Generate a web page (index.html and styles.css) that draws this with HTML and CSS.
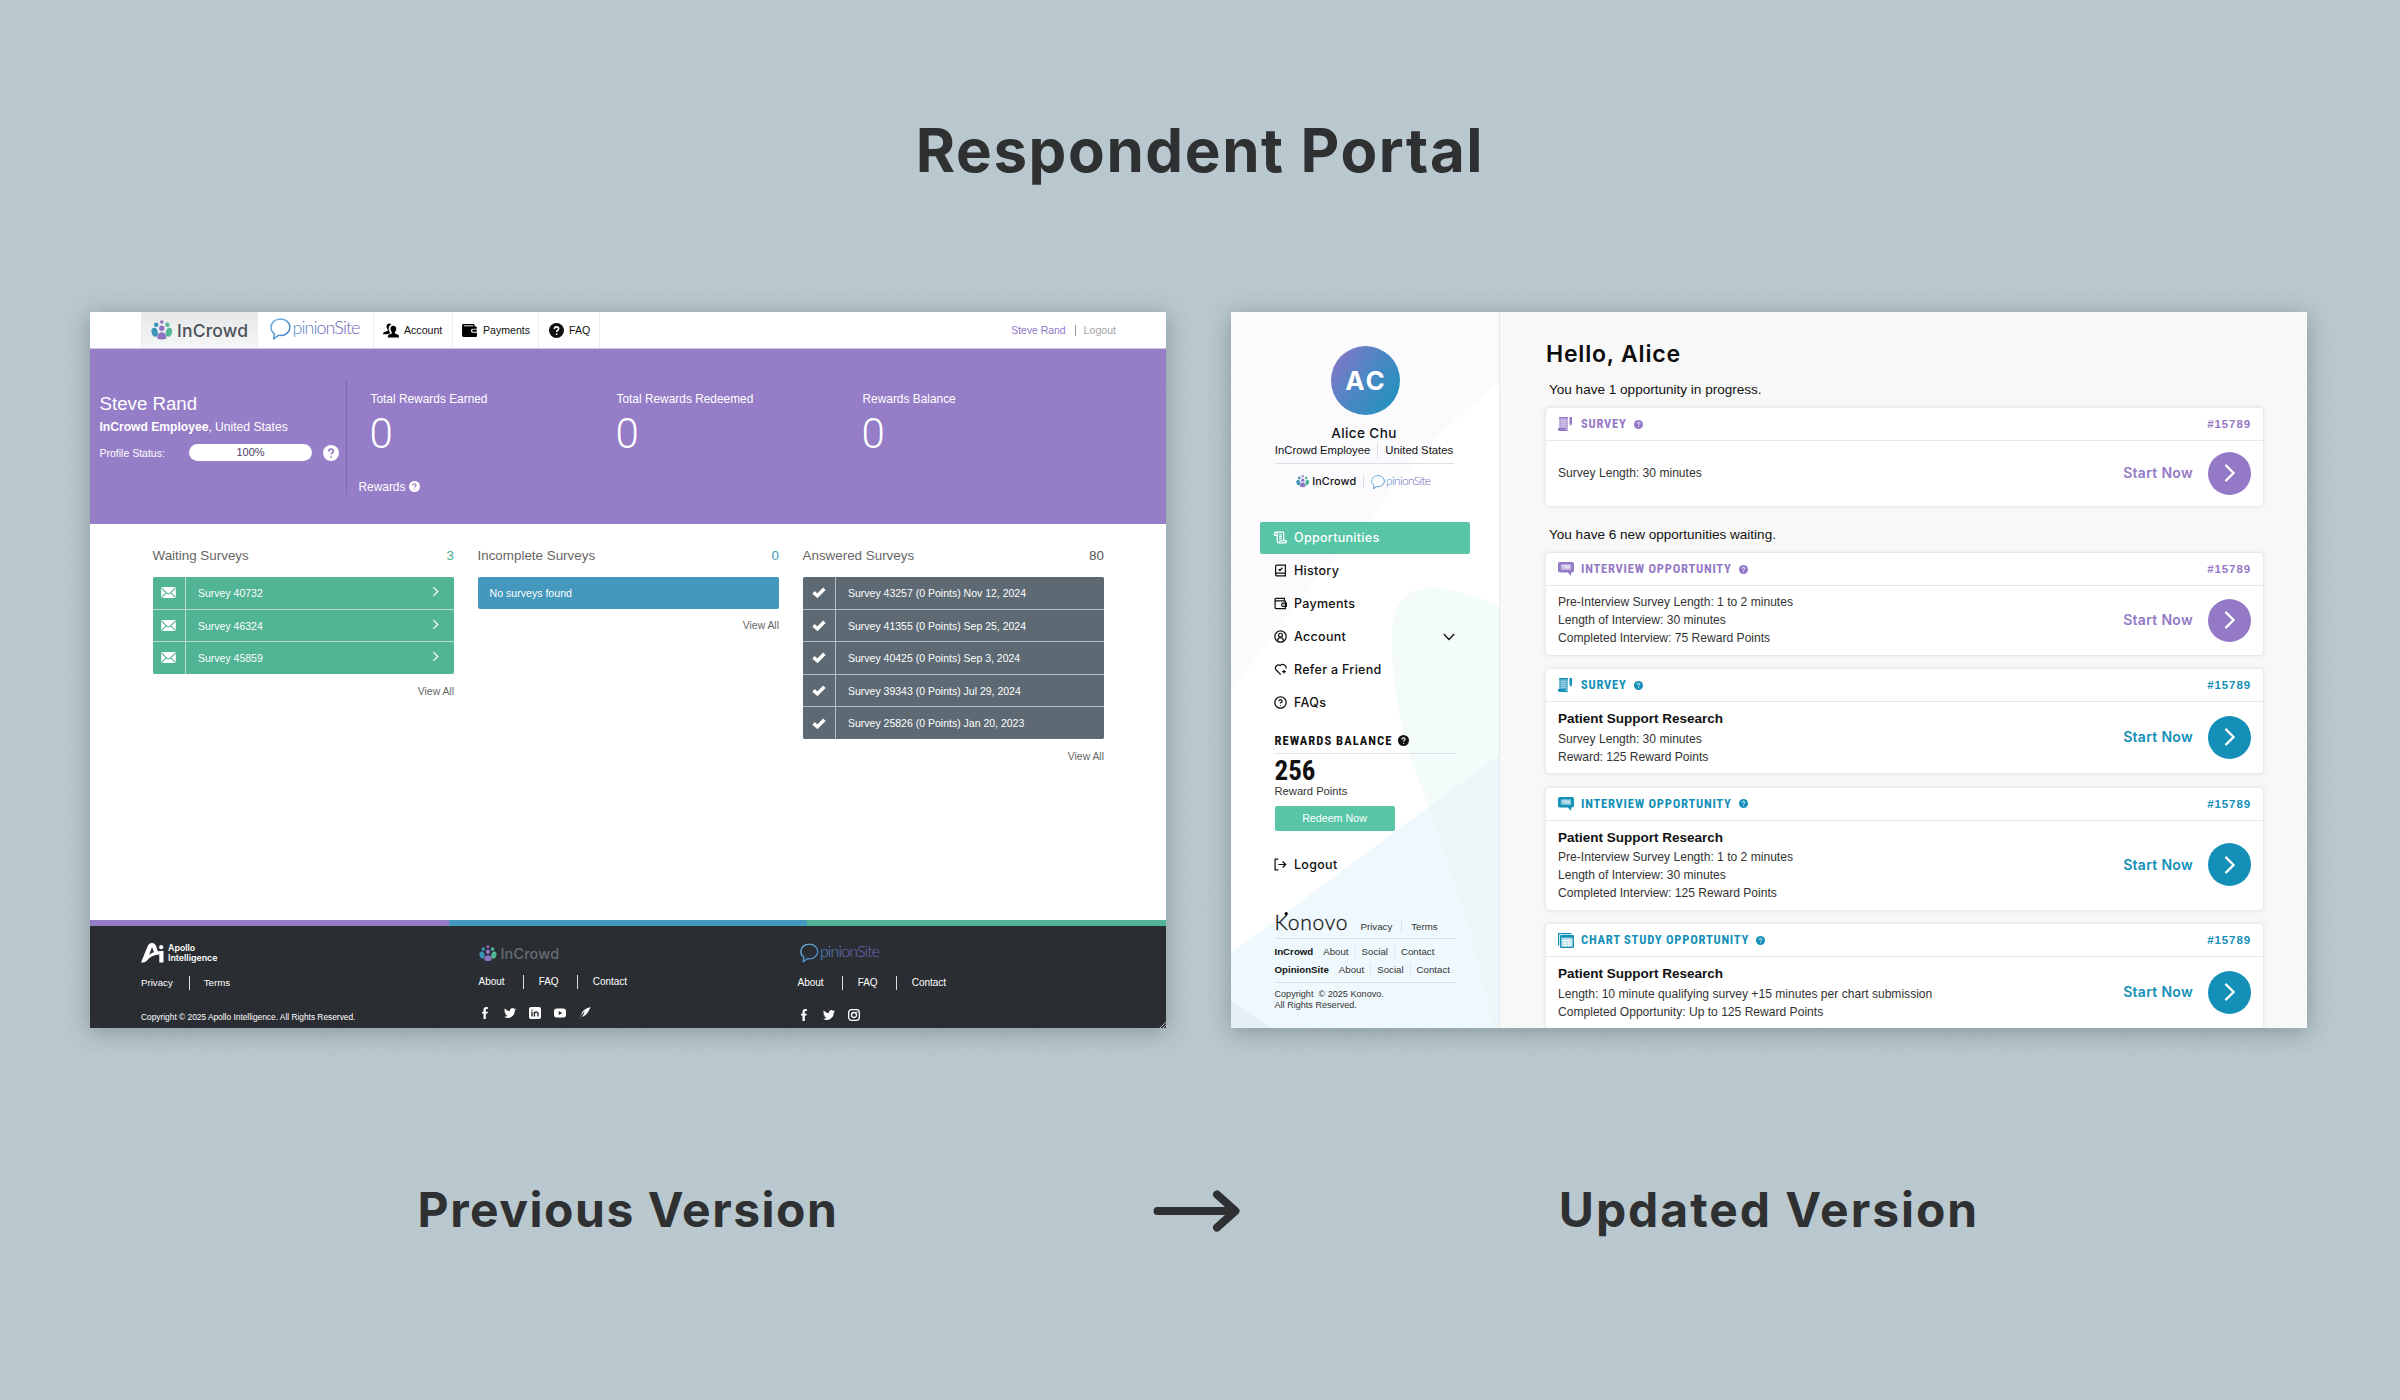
FILE: index.html
```html
<!DOCTYPE html>
<html lang="en">
<head>
<meta charset="UTF-8">
<title>Respondent Portal</title>
<link rel="stylesheet" href="styles.css">
</head>
<body>
  <!-- shared icons -->
  <svg class="sprite" aria-hidden="true">
    <defs>
      <linearGradient id="opinion-bubble" x1="0" y1="0" x2="1" y2="1">
        <stop offset="0" stop-color="#6fb7e2"/>
        <stop offset="1" stop-color="#3f7fc4"/>
      </linearGradient>
      <linearGradient id="opinion-text" x1="0" y1="0" x2="1" y2="0">
        <stop offset="0" stop-color="#5b93cf"/>
        <stop offset="0.5" stop-color="#6a68b8"/>
        <stop offset="1" stop-color="#6f62b5"/>
      </linearGradient>
    </defs>
    <symbol id="mark-incrowd" viewBox="0 0 22 20">
      <circle cx="10.8" cy="2" r="1.8" fill="#8c74c0"/>
      <circle cx="5.2" cy="4.8" r="2.2" fill="#3d93b5"/>
      <circle cx="16.4" cy="4.8" r="2.2" fill="#55b598"/>
      <circle cx="10.8" cy="8.3" r="2.7" fill="#8c74c0"/>
      <ellipse cx="3.7" cy="12.2" rx="3.1" ry="4.6" fill="#3d93b5" transform="rotate(-15 3.7 12.2)"/>
      <ellipse cx="17.9" cy="12.2" rx="3.1" ry="4.6" fill="#55b598" transform="rotate(15 17.9 12.2)"/>
      <path d="M6.3 18.6c0-4 1.6-6.3 4.5-6.3s4.5 2.3 4.5 6.3c-2.6 1.3-6.4 1.3-9 0z" fill="#8c74c0"/>
    </symbol>
    <symbol id="mark-opinion" viewBox="0 0 22 22">
      <path d="M3.6 21l.8-5.2C2.200 14.300 1 12 1 9.300 1 4.700 5.200 1 10.500 1S20 4.700 20 9.300s-4.200 8.300-9.500 8.300c-.8 0-1.500-.1-2.200-.2z" fill="none" stroke="url(#opinion-bubble)" stroke-width="1.500" stroke-linejoin="round"/>
    </symbol>
    <symbol id="i-help" viewBox="0 0 16 16">
      <circle cx="8" cy="8" r="8" fill="currentColor"/>
      <path d="M5.700 6.400c0-1.400 1-2.300 2.300-2.300s2.300.9 2.300 2.100c0 1.600-2.200 1.700-2.200 3.400M8.100 11.200v1.500" fill="none" stroke="var(--mark)" stroke-width="1.700"/>
    </symbol>
    <symbol id="i-user" viewBox="0 0 18 16">
      <path d="M9.500 1.200c-.5-.8-1.400-1.200-2.400-1.200C5.300 0 4 1.300 4 3.200c0 1.500.5 2.900 1.400 3.700v1.400L1.400 10C.5 10.400 0 11.200 0 12.200h5.600l2.700-1.400c-1.400-1.500-2-3.300-1.900-5.200.1-2 1.300-3.700 3.100-4.400z"/>
      <path d="M11.600 2.600c2 0 3.300 1.400 3.300 3.400 0 1.500-.6 2.900-1.500 3.700v1.600l3.500 1.600c.8.4 1.100 1.200 1.100 3.100H5.400c0-1.900.3-2.700 1.100-3.100l3.400-1.600V9.700C9 8.900 8.400 7.500 8.400 6c0-2 1.200-3.400 3.200-3.400z"/>
    </symbol>
    <symbol id="i-wallet" viewBox="0 0 16 14">
      <path d="M1.500 0H12c1 0 1.500.5 1.500 1.300v1.400h1c.9 0 1.500.6 1.500 1.500v.9h-4.200c-1.300 0-2.200.9-2.200 2.100s.9 2.100 2.200 2.100H16v3c0 1-.6 1.700-1.500 1.700h-13C.6 14 0 13.300 0 12.400V1.500C0 .6.600 0 1.500 0z"/>
      <rect x="2" y="1.500" width="10" height="1" fill="#fff"/>
      <rect x="10.800" y="6" width="5.200" height="2.400" rx="1.200"/>
    </symbol>
    <symbol id="i-mail" viewBox="0 0 16 12">
      <rect width="16" height="12" rx="1.500" fill="#fff"/>
      <path d="M.5 1.200l6 5.800c.9.800 2.100.8 3 0l6-5.800M.6 11.200l4.800-5M15.400 11.200l-4.800-5" fill="none" stroke="#51b494" stroke-width="1.200"/>
    </symbol>
    <symbol id="i-check" viewBox="0 0 14 11">
      <path d="M1.500 5.400l3.900 3.400 7-7" fill="none" stroke="#fff" stroke-width="3.400"/>
    </symbol>
    <symbol id="i-chevron" viewBox="0 0 8 12">
      <path d="M1.500 1l5 5-5 5" fill="none" stroke="currentColor" stroke-width="1.400"/>
    </symbol>
    <symbol id="i-facebook" viewBox="0 0 12 12">
      <path d="M4.500 12V6.600H3V4.700h1.500V3.200C4.500 1.200 5.500 0 7.400 0h1.400v2H7.700c-.7 0-.9.400-.9 1v1.700h2l-.2 1.900H6.800V12z"/>
    </symbol>
    <symbol id="i-twitter" viewBox="0 0 24 24">
      <path d="M24 4.600a10 10 0 0 1-2.800.8 5 5 0 0 0 2.200-2.700 10 10 0 0 1-3.100 1.200 4.900 4.900 0 0 0-8.400 4.500A14 14 0 0 1 1.700 3.100a4.900 4.900 0 0 0 1.500 6.600 5 5 0 0 1-2.200-.6 4.900 4.900 0 0 0 3.900 4.900 5 5 0 0 1-2.200.1 4.900 4.900 0 0 0 4.600 3.400A9.900 9.900 0 0 1 0 19.500 14 14 0 0 0 21.500 7.100 10 10 0 0 0 24 4.600z"/>
    </symbol>
    <symbol id="i-linkedin" viewBox="0 0 12 12">
      <rect width="12" height="12" rx="2"/>
      <path d="M3 4.800V9.500M5.400 9.500V4.800M5.400 7c0-2.700 3.600-2.700 3.600 0v2.500M3 2.400v1.300" fill="none" stroke="#2a2e33" stroke-width="1.400"/>
    </symbol>
    <symbol id="i-youtube" viewBox="0 0 12 12">
      <rect y="1.400" width="12" height="9.200" rx="2.800"/>
      <path d="M4.700 3.900L8.300 6 4.700 8.100z" fill="#2a2e33"/>
    </symbol>
    <symbol id="i-feather" viewBox="0 0 12 12">
      <path d="M.2 12C1.600 8.500 3.400 6.200 6 4c-1 2-.8 1.400-1.600 3.600L2.800 9.800C6.500 9.300 9.300 5.600 11.600 0 7.500.8 3.400 3.600 2.200 7.400 1.700 9 .8 10.400 0 11.800z"/>
    </symbol>
    <symbol id="i-instagram" viewBox="0 0 12 12">
      <rect x=".7" y=".7" width="10.600" height="10.600" rx="2.800" fill="none" stroke="#fff" stroke-width="1.300"/>
      <circle cx="6" cy="6" r="2.500" fill="none" stroke="#fff" stroke-width="1.300"/>
      <circle cx="9" cy="3" r=".7"/>
    </symbol>
    <symbol id="i-survey" viewBox="0 0 14 14">
      <path d="M1.200 0h8.600v12H1.200z" opacity=".7"/>
      <path d="M0 11h7.500v1.600h2.300V14H1.200C.5 14 0 13.500 0 12.800zM11.500 0H14v7L12.700 8.700 11.500 7zM1.200 0h8.600v1.200H1.200z"/>
      <path d="M3 3.200h5M3 5.200h5M3 7.200h5M3 9.200h5" stroke="#fff" stroke-width=".7" opacity=".7"/>
    </symbol>
    <symbol id="i-interview" viewBox="0 0 16 14">
      <path d="M2 0h12c1.200 0 2 .8 2 2v6.500c0 1.200-.8 2-2 2h-.8V14L9.800 10.500H2c-1.200 0-2-.8-2-2V2C0 .8.800 0 2 0z"/>
      <rect x="2.800" y="2.300" width="10.400" height="5.800" rx=".8" fill="#fff" opacity=".45"/>
      <path d="M4 4h8M5.500 5.800H12" stroke="#fff" stroke-width=".8"/>
    </symbol>
    <symbol id="i-chart" viewBox="0 0 16 15">
      <path d="M.6 12.500V.6h12.800" fill="none" stroke="currentColor" stroke-width="1.200"/>
      <rect x="2.600" y="2.600" width="12.800" height="11.800" rx=".6" fill="#fff" stroke="currentColor" stroke-width="1.200"/>
      <rect x="2.600" y="2.600" width="12.800" height="11.800" fill="currentColor" fill-opacity=".35"/>
      <path d="M2.600 3.600h12.800" stroke="currentColor" stroke-width="2"/>
      <path d="M4.200 7.600h9.600M4.200 10h9.600M4.200 12.300h9.600M6.800 5.500v8M11 5.500v8" stroke="#fff" stroke-width=".9"/>
    </symbol>
    <symbol id="i-scroll" viewBox="0 0 24 24">
      <path d="M6 9V19.500A2.500 2.500 0 0 0 8.500 22H20.500A2.500 2.500 0 0 0 23 19.500V18H11V19.500A2.500 2.500 0 0 1 8.500 22M18 18V4.500A2.500 2.500 0 0 0 15.500 2H3.500A2.500 2.500 0 0 0 1 4.500V8H6V4.500A2.500 2.500 0 0 0 3.500 2M9.500 7H14.500M9.500 10.500H14.500M9.500 14H14.500"/>
    </symbol>
    <symbol id="i-history" viewBox="0 0 24 24">
      <path d="M3 4.500A2.500 2.500 0 0 1 5.500 2H21V22H5.500A2.500 2.500 0 0 1 3 19.500zM3 19A2.500 2.500 0 0 1 5.500 17H21M8.500 9.500L11 12 15.500 7"/>
    </symbol>
    <symbol id="i-purse" viewBox="0 0 24 24">
      <path d="M21 7V21.500H4A2 2 0 0 1 2 19.500V4.500A2 2 0 0 1 4 2.500H19V7M2 7H21M23 11.500H17A3 3 0 0 0 17 17.500H23zM17.500 14.400V14.600"/>
    </symbol>
    <symbol id="i-account" viewBox="0 0 24 24">
      <circle cx="12" cy="12" r="10.500"/>
      <circle cx="12" cy="9.500" r="3.500"/>
      <path d="M6.500 19.500C7 15.500 9 14 12 14S17 15.500 17.500 19.500"/>
    </symbol>
    <symbol id="i-heart" viewBox="0 0 24 24">
      <path d="M12.500 21.500L3.500 12.500A6 6 0 0 1 12 4.500 6 6 0 0 1 22 10.500M18.500 12.500V19.500M15 16H22"/>
    </symbol>
    <symbol id="i-question" viewBox="0 0 24 24">
      <circle cx="12" cy="12" r="10.500"/>
      <path d="M9 9.500A3 3 0 1 1 12 12.500V14M12 16.500V18"/>
    </symbol>
    <symbol id="i-logout" viewBox="0 0 24 24">
      <path d="M8 2H2V22H8M8 12H21M16 6.500L21.500 12 16 17.500"/>
    </symbol>
  </svg>

  <h1>Respondent Portal</h1>

  <div class="windows">

    <!-- Previous version -->
    <section class="window old">
      <header class="old-header">
        <nav class="old-nav">
          <a class="brand active"><svg class="logo-ic" viewBox="0 0 97.500 20"><use href="#mark-incrowd" width="22" height="20"/><text x="26" y="16.600" class="incrowd-text" textLength="71">InCrowd</text></svg></a>
          <a class="brand"><svg class="logo-op" viewBox="0 0 91 22"><use href="#mark-opinion" width="22" height="22"/><text x="22.500" y="15.600" class="opinion-text" fill="url(#opinion-text)" textLength="68">pinionSite</text></svg></a>
          <a class="nav-account"><svg class="ic-user"><use href="#i-user"/></svg>Account</a>
          <a class="nav-payments"><svg class="ic-wallet"><use href="#i-wallet"/></svg>Payments</a>
          <a class="nav-faq"><svg class="ic-faq"><use href="#i-help"/></svg>FAQ</a>
        </nav>
        <div class="user-links"><span class="name">Steve Rand</span><span class="out">Logout</span></div>
      </header>

      <div class="banner">
        <div class="profile">
          <h2>Steve Rand</h2>
          <p class="role"><b>InCrowd Employee</b>, United States</p>
          <div class="status">
            <span class="status-label">Profile Status:</span>
            <span class="bar">100%</span>
            <svg class="help-16"><use href="#i-help"/></svg>
          </div>
        </div>
        <div class="rewards">
          <div class="totals">
            <div><p>Total Rewards Earned</p><span class="zero">0</span></div>
            <div><p>Total Rewards Redeemed</p><span class="zero">0</span></div>
            <div><p>Rewards Balance</p><span class="zero">0</span></div>
          </div>
          <p class="rewards-link">Rewards <svg class="help-11"><use href="#i-help"/></svg></p>
        </div>
      </div>

      <div class="lists">
        <div class="list green">
          <h3>Waiting Surveys <span>3</span></h3>
          <ul>
            <li><i><svg class="ic-mail"><use href="#i-mail"/></svg></i><span>Survey 40732</span><svg class="chev"><use href="#i-chevron"/></svg></li>
            <li><i><svg class="ic-mail"><use href="#i-mail"/></svg></i><span>Survey 46324</span><svg class="chev"><use href="#i-chevron"/></svg></li>
            <li><i><svg class="ic-mail"><use href="#i-mail"/></svg></i><span>Survey 45859</span><svg class="chev"><use href="#i-chevron"/></svg></li>
          </ul>
          <a class="view-all">View All</a>
        </div>
        <div class="list blue">
          <h3>Incomplete Surveys <span>0</span></h3>
          <div class="empty">No surveys found</div>
          <a class="view-all">View All</a>
        </div>
        <div class="list slate">
          <h3>Answered Surveys <span>80</span></h3>
          <ul>
            <li><i><svg class="ic-check"><use href="#i-check"/></svg></i><span>Survey 43257 (0 Points) Nov 12, 2024</span></li>
            <li><i><svg class="ic-check"><use href="#i-check"/></svg></i><span>Survey 41355 (0 Points) Sep 25, 2024</span></li>
            <li><i><svg class="ic-check"><use href="#i-check"/></svg></i><span>Survey 40425 (0 Points) Sep 3, 2024</span></li>
            <li><i><svg class="ic-check"><use href="#i-check"/></svg></i><span>Survey 39343 (0 Points) Jul 29, 2024</span></li>
            <li><i><svg class="ic-check"><use href="#i-check"/></svg></i><span>Survey 25826 (0 Points) Jan 20, 2023</span></li>
          </ul>
          <a class="view-all">View All</a>
        </div>
      </div>

      <div class="strip"><span class="s1"></span><span class="s2"></span><span class="s3"></span></div>
      <footer class="old-footer">
        <div class="col">
          <div class="apollo">
            <svg viewBox="0 0 23 20">
              <path d="M0 19.500L6.500 3.500C7.500 1 9 0 11 0c2 0 3.300 1 4 3l2.300 6.500-3.800.8L11 4.200 8 12c3-2.500 7.500-4 14.500-4.200V19.500h-4.200v-8c-5.500.5-9.300 2.300-11.800 5.500-1.200 1.600-2.500 2.500-4.500 2.500z" fill="#fff"/>
              <circle cx="20.200" cy="4.200" r="2.100" fill="#fff"/>
            </svg>
            <span>Apollo<br>Intelligence</span>
          </div>
          <div class="links"><a>Privacy</a><a>Terms</a></div>
          <p class="copy">Copyright © 2025 Apollo Intelligence. All Rights Reserved.</p>
        </div>
        <div class="col">
          <svg class="logo-ic" viewBox="0 0 97.500 20"><use href="#mark-incrowd" width="22" height="20"/><text x="26" y="16.600" class="incrowd-text" textLength="71">InCrowd</text></svg>
          <div class="links"><a>About</a><a>FAQ</a><a>Contact</a></div>
          <div class="social">
            <svg><use href="#i-facebook"/></svg><svg><use href="#i-twitter"/></svg><svg><use href="#i-linkedin"/></svg><svg><use href="#i-youtube"/></svg><svg><use href="#i-feather"/></svg>
          </div>
        </div>
        <div class="col">
          <svg class="logo-op" viewBox="0 0 91 22"><use href="#mark-opinion" width="22" height="22"/><text x="22.500" y="15.600" class="opinion-text" fill="url(#opinion-text)" textLength="68">pinionSite</text></svg>
          <div class="links"><a>About</a><a>FAQ</a><a>Contact</a></div>
          <div class="social">
            <svg><use href="#i-facebook"/></svg><svg><use href="#i-twitter"/></svg><svg><use href="#i-instagram"/></svg>
          </div>
        </div>
        <svg class="grip" viewBox="0 0 6 6"><path d="M0 6L6 0M3 6l3-3" stroke="#ddd" stroke-width=".8"/></svg>
      </footer>
    </section>

    <!-- Updated version -->
    <section class="window new">
      <aside class="sidebar">
        <div class="avatar">AC</div>
        <div class="alice">Alice Chu</div>
        <div class="who"><span>InCrowd Employee</span><span>United States</span></div>
        <div class="logos">
          <svg class="logo-ic" viewBox="0 0 97.500 20"><use href="#mark-incrowd" width="22" height="20"/><text x="26" y="16.600" class="incrowd-text" textLength="71">InCrowd</text></svg>
          <i></i>
          <svg class="logo-op" viewBox="0 0 91 22"><use href="#mark-opinion" width="22" height="22"/><text x="22.500" y="15.600" class="opinion-text" fill="url(#opinion-text)" textLength="68">pinionSite</text></svg>
        </div>

        <nav class="menu">
          <a class="current"><svg><use href="#i-scroll"/></svg><span>Opportunities</span></a>
          <a><svg><use href="#i-history"/></svg><span>History</span></a>
          <a><svg><use href="#i-purse"/></svg><span>Payments</span></a>
          <a><svg><use href="#i-account"/></svg><span>Account</span><svg class="down" viewBox="0 0 12 8"><path d="M.8 1L6 6.500 11.200 1"/></svg></a>
          <a><svg><use href="#i-heart"/></svg><span>Refer a Friend</span></a>
          <a><svg><use href="#i-question"/></svg><span>FAQs</span></a>
        </nav>

        <div class="balance">
          <h4>REWARDS BALANCE <svg><use href="#i-help"/></svg></h4>
          <p class="points">256</p>
          <p class="points-label">Reward Points</p>
          <button>Redeem Now</button>
        </div>

        <nav class="menu logout"><a><svg><use href="#i-logout"/></svg><span>Logout</span></a></nav>

        <div class="side-footer">
          <div class="konovo">
            <svg viewBox="0 0 74 19">
              <text x="-0.500" y="18.300" class="konovo-text" textLength="73">Konovo</text>
              <circle cx="11.200" cy="1.600" r="1.600"/>
            </svg>
            <a>Privacy</a><a>Terms</a>
          </div>
          <div class="brand-links">
            <div><b>InCrowd</b><a>About</a><a>Social</a><a>Contact</a></div>
            <div><b>OpinionSite</b><a>About</a><a>Social</a><a>Contact</a></div>
          </div>
          <p>Copyright&nbsp; © 2025 Konovo.<br>All Rights Reserved.</p>
        </div>
      </aside>

      <main>
        <h2>Hello, Alice</h2>
        <p class="lead">You have 1 opportunity in progress.</p>
        <article class="card purple tall">
          <header><svg class="ic-survey"><use href="#i-survey"/></svg><h5>SURVEY</h5><svg class="q"><use href="#i-help"/></svg><span class="num">#15789</span></header>
          <div class="body">
            <div class="text"><p>Survey Length: 30 minutes</p></div>
            <a class="start">Start Now</a><span class="go"><svg><use href="#i-chevron"/></svg></span>
          </div>
        </article>

        <p class="lead second">You have 6 new opportunities waiting.</p>
        <article class="card purple">
          <header><svg class="ic-interview"><use href="#i-interview"/></svg><h5>INTERVIEW OPPORTUNITY</h5><svg class="q"><use href="#i-help"/></svg><span class="num">#15789</span></header>
          <div class="body">
            <div class="text"><p>Pre-Interview Survey Length: 1 to 2 minutes</p><p>Length of Interview: 30 minutes</p><p>Completed Interview: 75 Reward Points</p></div>
            <a class="start">Start Now</a><span class="go"><svg><use href="#i-chevron"/></svg></span>
          </div>
        </article>
        <article class="card teal">
          <header><svg class="ic-survey"><use href="#i-survey"/></svg><h5>SURVEY</h5><svg class="q"><use href="#i-help"/></svg><span class="num">#15789</span></header>
          <div class="body">
            <div class="text"><h6>Patient Support Research</h6><p>Survey Length: 30 minutes</p><p>Reward: 125 Reward Points</p></div>
            <a class="start">Start Now</a><span class="go"><svg><use href="#i-chevron"/></svg></span>
          </div>
        </article>
        <article class="card teal">
          <header><svg class="ic-interview"><use href="#i-interview"/></svg><h5>INTERVIEW OPPORTUNITY</h5><svg class="q"><use href="#i-help"/></svg><span class="num">#15789</span></header>
          <div class="body">
            <div class="text"><h6>Patient Support Research</h6><p>Pre-Interview Survey Length: 1 to 2 minutes</p><p>Length of Interview: 30 minutes</p><p>Completed Interview: 125 Reward Points</p></div>
            <a class="start">Start Now</a><span class="go"><svg><use href="#i-chevron"/></svg></span>
          </div>
        </article>
        <article class="card teal">
          <header><svg class="ic-chart"><use href="#i-chart"/></svg><h5>CHART STUDY OPPORTUNITY</h5><svg class="q"><use href="#i-help"/></svg><span class="num">#15789</span></header>
          <div class="body">
            <div class="text"><h6>Patient Support Research</h6><p>Length: 10 minute qualifying survey +15 minutes per chart submission</p><p>Completed Opportunity: Up to 125 Reward Points</p></div>
            <a class="start">Start Now</a><span class="go"><svg><use href="#i-chevron"/></svg></span>
          </div>
        </article>
      </main>
    </section>
  </div>

  <div class="captions">
    <span>Previous Version</span>
    <svg viewBox="0 0 88 42"><path d="M4.500 21H82M64 4.500L82.500 21 64 37.500" fill="none" stroke="#2f3032" stroke-width="8" stroke-linecap="round" stroke-linejoin="round"/></svg>
    <span class="updated">Updated Version</span>
  </div>
</body>
</html>
```
FILE: styles.css
```css
* {
  box-sizing: border-box;
}

body {
  margin: 0;
  width: 2400px;
  height: 1400px;
  overflow: hidden;
  font-family: "Liberation Sans", Arial, sans-serif;
  color: #222;
  background-color: #bac9d0;
  background-image:
    url("data:image/svg+xml,%3Csvg xmlns='http://www.w3.org/2000/svg' width='300' height='300'%3E%3Cfilter id='n' x='0' y='0' width='1' height='1'%3E%3CfeTurbulence type='fractalNoise' baseFrequency='.45' numOctaves='3' stitchTiles='stitch'/%3E%3CfeColorMatrix values='0 0 0 0 .42 0 0 0 0 .5 0 0 0 0 .53 2 0 0 0 -.8'/%3E%3C/filter%3E%3Crect width='300' height='300' filter='url(%23n)' opacity='.32'/%3E%3C/svg%3E");
}

h1, h2, h3, h4, h5, h6, p, ul {
  margin: 0;
  padding: 0;
}

svg {
  display: block;
  flex: none;
}

.sprite {
  position: absolute;
  width: 0;
  height: 0;
}

h1 {
  padding-top: 114px;
  font: 700 60px/72px Inter, sans-serif;
  letter-spacing: 1.600px;
  text-align: center;
  color: #2f3032;
}

.windows {
  display: flex;
  gap: 65px;
  margin: 126px 0 0 90px;
}

.window {
  width: 1076px;
  height: 716px;
  overflow: hidden;
  background: #fff;
  box-shadow: 0 4px 22px rgba(50, 65, 65, 0.38);
}

.captions {
  display: grid;
  grid-template-columns: 1076px 65px 1076px;
  align-items: center;
  margin: 152px 0 0 90px;
  font: 700 48px/60px Inter, sans-serif;
  letter-spacing: 1.500px;
  text-align: center;
  color: #2f3032;
}

.captions .updated {
  letter-spacing: 1.950px;
}

.captions svg {
  width: 88px;
  height: 42px;
  justify-self: center;
  margin: 2px 3px 0 0;
}

/* logos */
.logo-ic, .logo-op, .konovo svg {
  overflow: visible;
}

.incrowd-text {
  font: 500 17.500px Inter, sans-serif;
  fill: currentColor;
}

.opinion-text {
  font: 300 18px Lato, sans-serif;
}

.konovo-text {
  font: 300 21px Lato, sans-serif;
  fill: #111;
  stroke: #111;
  stroke-width: 0.300px;
}

/* ---------- previous version ---------- */
.old {
  display: flex;
  flex-direction: column;
}

.old-header {
  display: flex;
  justify-content: space-between;
  height: 37px;
  border-bottom: 1px solid #cfc6e2;
  font-size: 10.600px;
}

.old-nav {
  display: flex;
  margin-left: 51px;
  color: #111;
}

.old-nav a {
  display: flex;
  align-items: center;
  border-right: 1px solid #ececec;
}

.old-nav .brand {
  width: 116px;
  padding-left: 12px;
}

.old-nav .brand:first-child {
  width: 117px;
  padding-left: 9px;
  border-left: 1px solid #ececec;
  color: #4b5158;
}

.old-nav .active {
  background: linear-gradient(#e6e8e9, #f5f6f6);
}

.old-nav .logo-ic {
  width: 97.500px;
  height: 20px;
}

.old-nav .logo-op {
  width: 91px;
  height: 22px;
  margin-top: -3px;
}

.nav-account {
  width: 79px;
  padding-left: 9px;
  gap: 5px;
}

.nav-payments {
  width: 86px;
  padding-left: 9px;
  gap: 6px;
}

.nav-faq {
  width: 61px;
  padding-left: 10px;
  gap: 5px;
  --mark: #fff;
}

.ic-user { width: 16px; height: 15px; }
.ic-wallet { width: 15px; height: 13px; }
.ic-faq { width: 15px; height: 15px; }

.user-links {
  display: flex;
  align-items: center;
  padding-right: 50px;
}

.user-links .name {
  padding-right: 9px;
  margin-right: 8px;
  border-right: 1px solid #999;
  color: #8d78c6;
  font-size: 10.400px;
}

.user-links .out {
  color: #a3a3a3;
}

.banner {
  display: flex;
  height: 175px;
  padding-top: 31px;
  background: #957dc7;
  color: #fff;
}

.profile {
  width: 257px;
  height: 114px;
  padding: 12px 0 0 9.500px;
  border-right: 1px solid #7f6bab;
}

.profile h2 {
  font-size: 18.700px;
  font-weight: 400;
  line-height: 24px;
}

.profile .role {
  margin-top: 2px;
  font-size: 12.100px;
  line-height: 18px;
}

.status {
  display: flex;
  align-items: center;
  margin-top: 8px;
  font-size: 10.500px;
}

.status-label {
  width: 89.500px;
}

.bar {
  width: 123px;
  height: 17px;
  border-radius: 9px;
  background: #fff;
  color: #4b4066;
  font-size: 11px;
  line-height: 17px;
  text-align: center;
}

.help-16 {
  width: 16px;
  height: 16px;
  margin-left: 11px;
  --mark: #957dc7;
}

.rewards {
  padding-left: 11.500px;
}

.totals {
  display: flex;
  padding: 10px 0 0 12px;
}

.totals div {
  width: 246px;
}

.totals p {
  font-size: 11.900px;
  line-height: 18px;
}

.zero {
  display: block;
  margin: 1px 0 -1px -1px;
  font: 300 42px/50px Roboto, sans-serif;
}

.rewards-link {
  display: flex;
  align-items: center;
  gap: 4px;
  margin-top: 20px;
  font-size: 11.900px;
  line-height: 18px;
}

.help-11 {
  width: 11px;
  height: 11px;
  margin-top: -2px;
  --mark: #957dc7;
}

.lists {
  display: flex;
  flex: 1;
  gap: 23.500px;
  padding: 21.500px 0 0 62.500px;
}

.list {
  width: 301.500px;
}

.list h3 {
  display: flex;
  justify-content: space-between;
  margin-bottom: 11.500px;
  font-size: 13.400px;
  font-weight: 400;
  line-height: 20px;
  color: #666;
}

.list.green h3 span { color: #45b08c; }
.list.blue h3 span { color: #3b98bd; }
.list.slate h3 span { color: #555; }

.list ul {
  display: flex;
  flex-direction: column;
  gap: 1px;
  list-style: none;
  border-radius: 2px;
  overflow: hidden;
  background: #b9dccf;
}

.list.slate ul {
  background: #b4bfc5;
}

.list li {
  display: flex;
  height: 31.600px;
  font-size: 10.500px;
  line-height: 33px;
  color: #fff;
}

.list li i {
  display: flex;
  align-items: center;
  justify-content: center;
  width: 33.500px;
  border-right: 1px solid #b9dccf;
}

.list.slate li i {
  border-color: #b4bfc5;
}

.list li span {
  flex: 1;
  padding-left: 12px;
}

.green li { background: #51b494; }
.slate li { background: #5d6a73; }

.ic-mail { width: 15px; height: 11px; }
.ic-check { width: 14px; height: 11px; }

.chev {
  width: 7px;
  height: 11px;
  margin: 9px 15px 0 0;
}

.empty {
  height: 32px;
  padding-left: 12px;
  border-radius: 2px;
  background: #4497bd;
  color: #fff;
  font-size: 10.600px;
  line-height: 33px;
}

.view-all {
  display: block;
  margin-top: 9px;
  font-size: 10.400px;
  line-height: 16px;
  text-align: right;
  color: #666;
}

.list ul + .view-all {
  margin-top: 10px;
}

.strip {
  display: flex;
  height: 6px;
}

.strip span { flex: 1; }
.s1 { background: #957dc7; }
.s2 { background: #4497bd; }
.s3 { background: #51b494; }

.old-footer {
  position: relative;
  display: grid;
  grid-template-columns: 337.500px 319px 1fr;
  height: 102px;
  padding: 17px 0 0 51px;
  background: #2a2e33;
  color: #fff;
}

.apollo {
  display: flex;
  gap: 4px;
  height: 20px;
  font: 600 8.800px/10px Inter, sans-serif;
}

.apollo svg {
  width: 23px;
  height: 20px;
}

.old-footer .logo-ic {
  width: 80.500px;
  height: 16.500px;
  margin: 2px 0 1.500px;
  color: #646c70;
}

.old-footer .logo-op {
  width: 80.500px;
  height: 20px;
  margin-left: 2px;
}

.links {
  display: flex;
  margin-top: 13px;
  font-size: 10px;
  line-height: 14px;
}

.links a:not(:last-child) {
  margin-right: 15px;
  padding-right: 18px;
  border-right: 1px solid #ddd;
}

.col:first-child .links {
  font-size: 9.700px;
}

.col:first-child .links a:first-child {
  padding-right: 16px;
  margin-right: 14px;
}

.copy {
  margin-top: 20.500px;
  font-size: 8.350px;
  line-height: 12px;
}

.social {
  display: flex;
  gap: 13px;
  margin-top: 18.500px;
  fill: #fff;
}

.social svg {
  width: 12px;
  height: 12px;
}

.grip {
  position: absolute;
  right: 0;
  bottom: 0;
  width: 6px;
  height: 6px;
}

/* ---------- updated version ---------- */
.new {
  display: flex;
  background: #f8f8f8;
}

.sidebar {
  width: 269px;
  height: 716px;
  padding-top: 34px;
  border-right: 1px solid #e6e8ec;
  color: #111;
  background: #fff url("data:image/svg+xml,%3Csvg xmlns='http://www.w3.org/2000/svg' width='268' height='716'%3E%3Cpath d='M0 0H268V71Q190 130 142 205Q70 280 0 380z' fill='%23fbfafd'/%3E%3Cpath d='M0 641L268 443V716H0z' fill='%23eaf6fb' fill-opacity='.75'/%3E%3Cpath d='M161 320C162 270 200 265 268 294V716H262Q245 620 189 471Q160 400 161 320z' fill='%23e6f6f7' fill-opacity='.45'/%3E%3Cpath d='M0 688L40 716H0z' fill='%23e4eff8'/%3E%3C/svg%3E") no-repeat;
}

.avatar {
  width: 69px;
  height: 69px;
  margin: 0 auto;
  border-radius: 50%;
  background: linear-gradient(125deg, #7f78c6 10%, #4a87c4 50%, #2292bd 90%);
  color: #fff;
  font: 700 26px/69px Inter, sans-serif;
  letter-spacing: 2px;
  text-indent: 2px;
  text-align: center;
}

.alice {
  margin: 9px 2px 0 0;
  font: 500 13.500px/18px Inter, sans-serif;
  letter-spacing: 0.400px;
  text-align: center;
}

.who {
  display: flex;
  justify-content: center;
  width: 179px;
  height: 22px;
  margin: 0 0 0 43.500px;
  border-bottom: 1px solid #dfe0e6;
  font-size: 11.300px;
  line-height: 16px;
  white-space: nowrap;
}

.who span:first-child {
  height: 16px;
  margin-right: 7px;
  padding-right: 7px;
  border-right: 1px solid #dfe0e6;
}

.logos {
  display: flex;
  justify-content: center;
  margin: 11px 3px 0 0;
}

.logos .logo-ic {
  width: 60.500px;
  height: 12.400px;
}

.logos .logo-op {
  width: 60.500px;
  height: 14.600px;
}

.logos i {
  width: 1px;
  height: 14px;
  margin: 0 7px;
  background: #dfe0e6;
}

.menu {
  display: flex;
  flex-direction: column;
  gap: 1px;
  width: 210px;
  margin: 32.400px 0 0 29px;
  font: 500 12.500px/32px Inter, sans-serif;
  letter-spacing: 0.300px;
}

.menu a {
  display: flex;
  align-items: center;
  height: 32px;
  padding-left: 14px;
  border-radius: 2px;
}

.menu span {
  margin-left: 7px;
}

.menu svg {
  width: 13px;
  height: 13px;
  fill: none;
  stroke: currentColor;
  stroke-width: 2.300;
}

.menu .current {
  background: #57c5a6;
  color: #fff;
}

.menu .down {
  width: 12px;
  height: 8px;
  margin-left: auto;
  margin-right: 15px;
  stroke-width: 1.300;
}

.balance {
  width: 182px;
  margin: 14px 0 0 43.500px;
}

.balance h4 {
  display: flex;
  align-items: center;
  gap: 6px;
  height: 21px;
  padding-bottom: 4px;
  border-bottom: 1px solid #dfe3e8;
  font: 700 12.600px/16px "Roboto Condensed", sans-serif;
  letter-spacing: 1px;
}

.balance h4 svg {
  width: 11px;
  height: 11px;
  --mark: #fff;
}

.points {
  margin-top: 4px;
  font: 700 27px/27px "Roboto Condensed", sans-serif;
}

.points-label {
  font-size: 11.200px;
  line-height: 12px;
  color: #333;
}

.balance button {
  display: block;
  width: 120px;
  height: 25px;
  margin-top: 9px;
  padding: 0;
  border: 0;
  border-radius: 2px;
  background: #57c5a6;
  color: #fff;
  font: 10.700px "Liberation Sans", sans-serif;
}

.logout {
  margin-top: 18px;
}

.side-footer {
  width: 182px;
  margin: 31px 0 0 43.500px;
  font-size: 9.700px;
  color: #333;
}

.konovo {
  display: flex;
  height: 27px;
  border-bottom: 1px solid #d8dfe6;
}

.konovo svg {
  width: 74px;
  height: 19px;
}

.konovo a {
  height: 13px;
  margin: 8px 0 0 12px;
  line-height: 13px;
}

.konovo a:last-child {
  margin-left: 9px;
  padding-left: 9px;
  border-left: 1px solid #dfe5ea;
}

.brand-links {
  height: 44px;
  padding-top: 4px;
  border-bottom: 1px solid #d8dfe6;
  line-height: 18px;
}

.brand-links div {
  display: flex;
  align-items: center;
}

.brand-links b {
  margin-right: 10px;
  color: #111;
}

.brand-links a {
  line-height: 12px;
}

.brand-links a + a {
  margin-left: 6px;
  padding-left: 6px;
  border-left: 1px solid #dfe5ea;
}

.side-footer p {
  margin-top: 6px;
  font-size: 9.100px;
  line-height: 11px;
}

main {
  flex: 1;
  padding: 27px 43px 0 45px;
}

main h2 {
  margin-left: 1px;
  font: 600 23px/30px Inter, sans-serif;
  letter-spacing: 0.800px;
  color: #0c0c0c;
}

.lead {
  margin: 11px 0 7px 4px;
  font-size: 13.550px;
  line-height: 20px;
  color: #111;
}

.lead.second {
  margin-top: 18px;
}

.card {
  margin-bottom: 12.500px;
  border: 1px solid #e9e9ea;
  border-radius: 4px;
  background: #fff;
  box-shadow: 0 0 5px rgba(0, 0, 0, 0.07);
}

.card.tall {
  margin-bottom: 0;
}

.card header {
  display: flex;
  align-items: center;
  height: 33px;
  padding: 0 12px 0 12px;
  border-bottom: 1px solid #e9e9ea;
}

.purple { color: #9479c6; }
.teal { color: #138fb8; }

.card header svg {
  fill: currentColor;
}

.ic-survey { width: 14px; height: 14px; margin-right: 9px; }
.ic-interview { width: 16px; height: 14px; margin-right: 7px; }
.ic-chart { width: 16px; height: 15px; margin-right: 7px; }

.card h5 {
  font: 700 12.600px/16px "Roboto Condensed", sans-serif;
  letter-spacing: 0.750px;
}

.card .q {
  width: 9px;
  height: 9px;
  margin-left: 7px;
  --mark: #fff;
}

.num {
  margin-left: auto;
  font-size: 11.500px;
  font-weight: 700;
  letter-spacing: 0.900px;
}

.body {
  display: flex;
  align-items: center;
  padding: 7px 12px 7.500px 12px;
}

.tall .body {
  height: 65px;
}

.text {
  flex: 1;
  font-size: 12.080px;
  line-height: 18px;
  color: #333;
}

.text h6 {
  margin-bottom: 0.500px;
  font-size: 13.500px;
  line-height: 20px;
  color: #111;
}

.start {
  margin-right: 15px;
  font: 600 14px/20px Inter, sans-serif;
  letter-spacing: 0.300px;
}

.go {
  display: flex;
  align-items: center;
  justify-content: center;
  width: 43px;
  height: 43px;
  border-radius: 50%;
  background: currentColor;
}

.go svg {
  width: 13px;
  height: 20px;
  color: #fff;
}
```
